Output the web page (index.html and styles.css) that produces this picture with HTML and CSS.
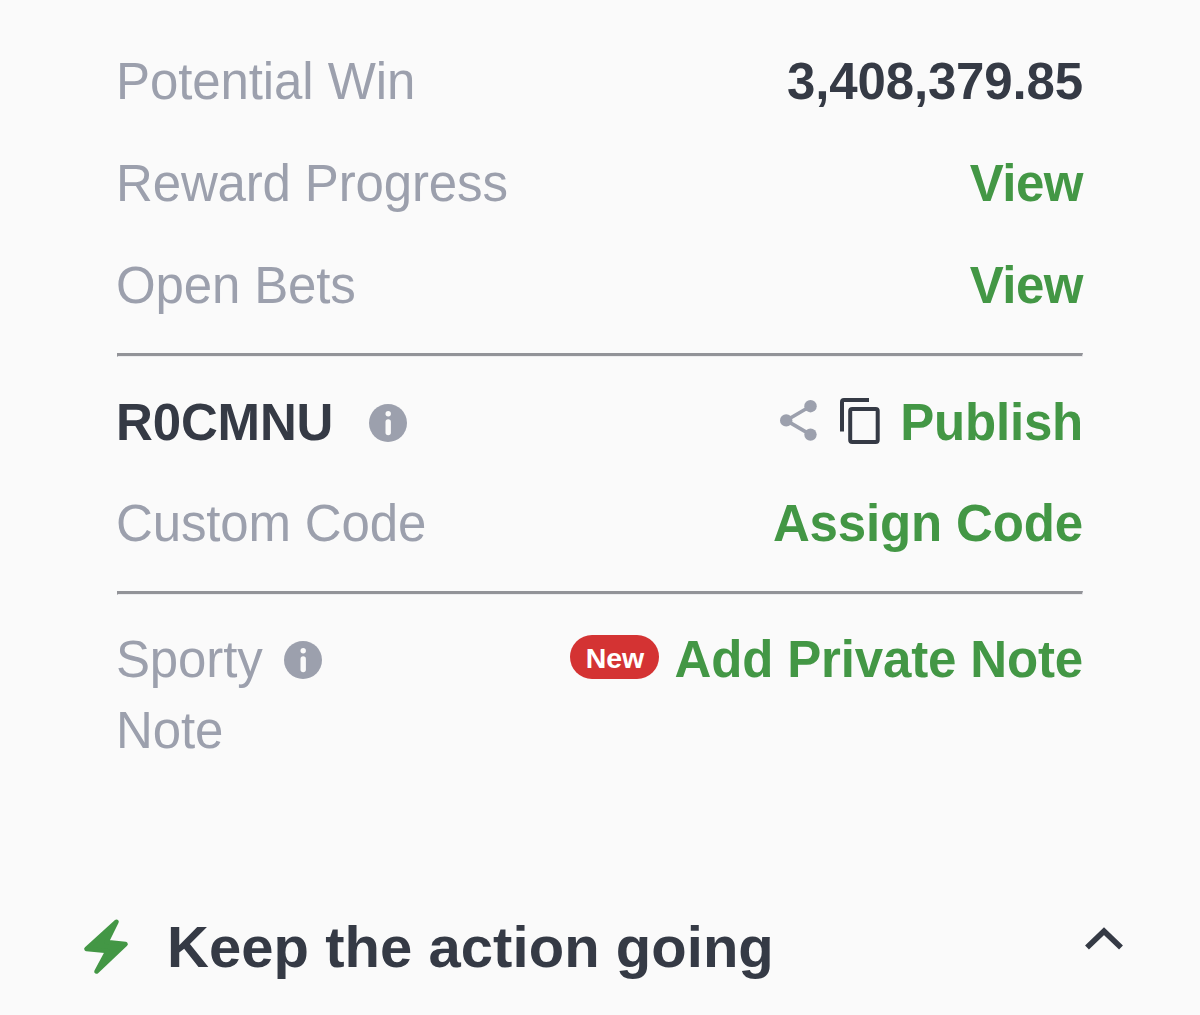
FILE: index.html
```html
<!DOCTYPE html>
<html lang="en">
<head>
<meta charset="utf-8">
<title>Bet details</title>
<link rel="stylesheet" href="styles.css">
</head>
<body>
<main class="details">
  <section class="group">
    <div class="row"><span class="label win">Potential Win</span><span class="amount">3,408,379.85</span></div>
    <div class="row"><span class="label">Reward Progress</span><a class="link view">View</a></div>
    <div class="row"><span class="label">Open Bets</span><a class="link view">View</a></div>
  </section>
  <hr class="rule">
  <section class="group codes">
    <div class="row">
      <span class="code">R0CMNU</span>
      <svg class="info code-info" viewBox="0 0 38 38"><circle cx="19" cy="19" r="19" fill="#9ca0ad"/><circle cx="19.200" cy="9.700" r="2.700" fill="#fafafa"/><rect x="16.500" y="15.300" width="5.400" height="16" rx="2.700" fill="#fafafa"/></svg>
      <svg class="share" viewBox="0 0 38 41"><path d="M30.500 6.200 6.200 20.400 30.500 34.600" fill="none" stroke="#9ca0ad" stroke-width="3.600"/><circle cx="30.500" cy="6.200" r="6.200" fill="#9ca0ad"/><circle cx="6.200" cy="20.400" r="6.200" fill="#9ca0ad"/><circle cx="30.500" cy="34.600" r="6.200" fill="#9ca0ad"/></svg>
      <svg class="copy" viewBox="0 0 40 46"><path d="M2 33.500V4q0-2 2-2h25" fill="none" stroke="#353a45" stroke-width="4"/><rect x="10.200" y="11" width="27.500" height="33" rx="2" fill="none" stroke="#353a45" stroke-width="4"/></svg>
      <a class="link publish">Publish</a>
    </div>
    <div class="row"><span class="label">Custom Code</span><a class="link">Assign Code</a></div>
  </section>
  <hr class="rule">
  <section class="group">
    <div class="row note-row">
      <span class="label">Sporty<br>Note</span>
      <svg class="info note-info" viewBox="0 0 38 38"><circle cx="19" cy="19" r="19" fill="#9ca0ad"/><circle cx="19.200" cy="9.700" r="2.700" fill="#fafafa"/><rect x="16.500" y="15.300" width="5.400" height="16" rx="2.700" fill="#fafafa"/></svg>
      <span class="badge">New</span>
      <a class="link add">Add Private Note</a>
    </div>
  </section>
</main>
<section class="action">
  <svg class="bolt" viewBox="0 0 46 56"><path d="M33.500 2.800 3.500 30 24.500 32 13.500 52.500 42.500 25 23.500 23Z" fill="#439745" stroke="#439745" stroke-width="4.600" stroke-linejoin="round"/></svg>
  <h2 class="title">Keep the action going</h2>
  <svg class="chevron" viewBox="0 0 38 24"><path d="M2 20.500 19 4.200 36 20.500" fill="none" stroke="#353a45" stroke-width="5.600"/></svg>
</section>
</body>
</html>
```
FILE: styles.css
```css
* { box-sizing: border-box; }
body { margin: 0; height: 1015px; overflow: hidden; background: #fafafa; color: #353a45; font-family: "Liberation Sans", Arial, sans-serif; }
svg { display: block; flex: none; }
.details { height: 860px; padding: 30px 117px 0 116px; }
.row { display: flex; align-items: center; height: 102px; font-size: 51px; line-height: 71px; letter-spacing: -0.15px; white-space: nowrap; }
.rule { height: 4px; margin: 0 0 0 1px; border: 1px solid #ededef; border-top: 3px solid #929398; border-left-color: #929398; }
.group:first-child { height: 323px; }
.codes { height: 234px; padding-top: 14px; }
.codes .row + .row { height: 100px; }
.label { color: #9ca0ad; }
.win { letter-spacing: -0.1px; }
.amount, .link, .code { font-weight: 700; }
.amount, .link { margin-left: auto; }
.link { color: #439745; }
.view { letter-spacing: -0.5px; }
.info { width: 38px; height: 38px; }
.code-info { margin: 2px 0 0 36px; }
.share { width: 38px; height: 41px; margin: -3px 0 0 auto; }
.copy { width: 40px; height: 46px; margin: -3px 0 0 22px; }
.publish { margin-left: 20px; letter-spacing: -0.2px; }
.note-row { align-items: flex-start; height: 174px; padding-top: 29px; }
.note-info { margin: 17px 0 0 21px; }
.badge { width: 89px; height: 44px; margin: 11px 15px 0 auto; border-radius: 22px; background: #d43333; color: #fff; font-size: 28.500px; font-weight: 700; line-height: 46px; letter-spacing: 0; text-align: center; }
.add { margin-left: 0; }
.action { display: flex; align-items: center; height: 155px; padding: 18px 77px 0 83px; }
.bolt { width: 46px; height: 56px; }
.title { margin: 0 0 0 38px; font-size: 58px; line-height: 70px; letter-spacing: 0.05px; white-space: nowrap; }
.chevron { width: 38px; height: 24px; margin-left: auto; margin-top: -16px; }
```
